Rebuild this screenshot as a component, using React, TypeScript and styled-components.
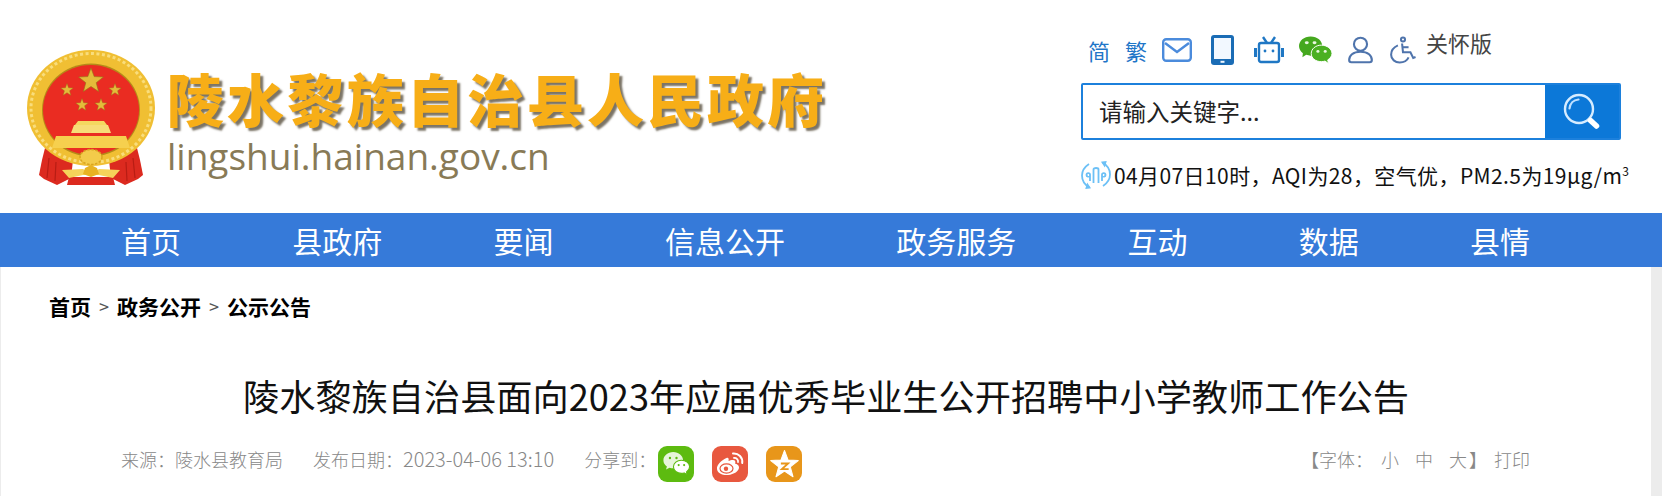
import styled, { createGlobalStyle } from "styled-components";

const CJK = `"Noto Sans CJK SC", "Noto Sans", sans-serif`;

const NAV_ITEMS = ["首页", "县政府", "要闻", "信息公开", "政务服务", "互动", "数据", "县情"];

const GlobalStyle = createGlobalStyle`
    html, body {
        margin: 0;
        padding: 0;
        background: #ececec;
        font-family: ${CJK};
    }
`;

function starPoints(cx: number, cy: number, r: number) {
    const pts: string[] = [];
    for (let i = 0; i < 10; i++) {
        const rad = i % 2 === 0 ? r : r * 0.42;
        const a = -Math.PI / 2 + (i * Math.PI) / 5;
        pts.push(`${(cx + rad * Math.cos(a)).toFixed(1)},${(cy + rad * Math.sin(a)).toFixed(1)}`);
    }
    return pts.join(" ");
}

function Emblem() {
    return (
        <svg width="128" height="135" viewBox="0 0 128 135">
            {/* drapes */}
            <path d="M18 98 L15 110 L12 125 L17 129 L30 135 L44 128 L46 110 Z" fill="#dc2a1f" />
            <path d="M110 98 L113 110 L116 125 L111 129 L98 135 L84 128 L82 110 Z" fill="#dc2a1f" />
            <path d="M22 108 L20 128 M29 112 L28 131 M106 108 L108 128 M99 112 L100 131" stroke="#b81d14" strokeWidth="1.2" fill="none" />
            <path d="M42 127 H86 L88 135 H40 Z" fill="#dc2a1f" />
            {/* ring */}
            <ellipse cx="64" cy="58" rx="64" ry="58" fill="#f0bf33" />
            <ellipse cx="64" cy="58" rx="60" ry="54.5" fill="none" stroke="#f9dd7c" strokeWidth="3" strokeDasharray="3 2.5" />
            <ellipse cx="64" cy="60" rx="49" ry="46.5" fill="#b58a18" />
            {/* disc */}
            <ellipse cx="64" cy="60" rx="48" ry="45" fill="#ea2c22" />
            {/* stars */}
            <polygon points={starPoints(64, 31, 13)} fill="#e4bb3a" stroke="#94721a" strokeWidth="0.6" />
            <polygon points={starPoints(40, 40, 6.5)} fill="#e4bb3a" stroke="#94721a" strokeWidth="0.4" />
            <polygon points={starPoints(88, 40, 6.5)} fill="#e4bb3a" stroke="#94721a" strokeWidth="0.4" />
            <polygon points={starPoints(55, 55, 6.5)} fill="#e4bb3a" stroke="#94721a" strokeWidth="0.4" />
            <polygon points={starPoints(74, 55, 6.5)} fill="#e4bb3a" stroke="#94721a" strokeWidth="0.4" />
            {/* gate */}
            <path d="M48 75 L51 71 H77 L80 75 Z" fill="#f5d860" />
            <path d="M44 83 L47 75 H81 L84 83 Z" fill="#f7dd78" />
            <path d="M29 86 H99 L103 98 H25 Z" fill="#f6d04e" />
            {/* gear and ribbon */}
            <ellipse cx="64" cy="107" rx="11" ry="7.5" fill="#f3cb4a" stroke="#d9a51f" strokeWidth="1.5" strokeDasharray="2.5 1.5" />
            <path d="M35 120 L56 119 L64 124 L72 119 L93 120 L86 128 L72 125 H56 L42 128 Z" fill="#f5d35a" />
            <path d="M56 124 L58 118 L64 115 L70 118 L72 124 L64 127 Z" fill="#e8b322" />
        </svg>
    );
}

function MailIcon() {
    return (
        <svg width="30" height="24" viewBox="0 0 30 24" fill="none" stroke="#4b8bdc" strokeWidth="2.4">
            <rect x="1.2" y="1.2" width="27.6" height="21.6" rx="3" />
            <path d="M3 5 L15 14 L27 5" />
        </svg>
    );
}

function PhoneIcon() {
    return (
        <svg width="23" height="30" viewBox="0 0 23 30">
            <rect width="23" height="30" rx="3" fill="#1a6cb5" />
            <rect x="3" y="3" width="17" height="21" fill="#f2f8ff" />
            <rect x="9.5" y="25.8" width="4" height="2" fill="#f2f8ff" />
        </svg>
    );
}

function TvIcon() {
    return (
        <svg width="30" height="28" viewBox="0 0 30 28" fill="none" stroke="#1f77c4" strokeWidth="2.4">
            <path d="M9 1 L13 7 M21 1 L17 7" />
            <rect x="5" y="7" width="20" height="19" rx="2" />
            <path d="M1.5 12 V21 M28.5 12 V21" strokeWidth="3" />
            <circle cx="11" cy="15" r="1.4" fill="#1f77c4" stroke="none" />
            <circle cx="19" cy="15" r="1.4" fill="#1f77c4" stroke="none" />
        </svg>
    );
}

function WechatIcon() {
    return (
        <svg width="33" height="28" viewBox="0 0 34 28">
            <path d="M12 0 C5 0 0 4.5 0 10 C0 13 1.6 15.6 4 17.4 L3.5 21.5 L7.4 19 C9 19.6 10.5 19.8 12 19.8 C19 19.8 24 15.4 24 10 C24 4.5 19 0 12 0 Z" fill="#45a81e" />
            <path d="M23 9 C17 9 12.6 13 12.6 17.6 C12.6 22.4 17 26 23 26 C24.4 26 25.6 25.8 26.8 25.4 L30.4 28 L29.6 24.2 C32.2 22.6 34 20.2 34 17.6 C34 13 29 9 23 9 Z" fill="#4bb022" stroke="#fff" strokeWidth="1" />
            <ellipse cx="8" cy="6.5" rx="2" ry="1.5" fill="#eaf7e0" />
            <ellipse cx="16" cy="6.5" rx="2" ry="1.5" fill="#eaf7e0" />
            <ellipse cx="19.5" cy="15.5" rx="1.6" ry="1.4" fill="#eaf7e0" />
            <ellipse cx="27" cy="15.5" rx="1.6" ry="1.4" fill="#eaf7e0" />
        </svg>
    );
}

function UserIcon() {
    return (
        <svg width="25" height="28" viewBox="0 0 26 28" fill="none" stroke="#4f74ac" strokeWidth="2.2">
            <circle cx="13" cy="8" r="6.8" />
            <path d="M3.5 26.8 H22.5 C24 26.8 24.8 26 24.8 24.5 C24.8 20 21 15.8 13 15.8 C5 15.8 1.2 20 1.2 24.5 C1.2 26 2 26.8 3.5 26.8 Z" />
        </svg>
    );
}

function AccessIcon() {
    return (
        <svg width="26" height="28" viewBox="0 0 28 29" fill="none" stroke="#4f74ac" strokeWidth="2.2">
            <circle cx="14" cy="3.2" r="2.2" />
            <path d="M13 7.5 L14 17 H22 L25 23 L27.5 22" />
            <path d="M8.5 9.5 C3.8 11.6 1.2 15.4 1.2 19.5 C1.2 24.6 5.6 28 10.4 28 C15 28 18.6 25.6 20 22.5" />
            <path d="M13.5 11.5 H20" />
        </svg>
    );
}

function SearchIcon() {
    return (
        <svg width="38" height="38" viewBox="0 0 38 38" fill="none">
            <circle cx="16" cy="16" r="14" stroke="#d6ecff" strokeWidth="2.4" />
            <path d="M6.5 15.5 C7 10.5 10.5 7 15.5 6.5" stroke="#bfe0ff" strokeWidth="2.2" strokeLinecap="round" />
            <path d="M27.5 27.5 L33.5 33" strokeWidth="5.5" strokeLinecap="round" stroke="#fff" />
        </svg>
    );
}

function AirIcon() {
    return (
        <svg width="30" height="30" viewBox="0 0 30 30" fill="none" stroke="#6cc0f6" strokeWidth="1.8">
            <path d="M8 4 C3.5 7 1 11 1 15.5 C1 20.5 4 25 8.5 27.5" />
            <path d="M22 26 C26.5 23 29 19 29 14.5 C29 9.5 26 5 21.5 2.5" />
            <path d="M8.5 27.5 L5.5 28 L6.5 24.5 Z M21.5 2.5 L24.5 2 L23.5 5.5 Z" fill="#6cc0f6" />
            <path d="M12.5 23 V9.5 C12.5 7.5 17.5 7.5 17.5 9.5 V23" />
            <path d="M9 21 V14.5 C9 12.5 5.5 12.5 5.5 15 C5.5 17 8 17 8 16" />
            <path d="M21 21 V14.5 C21 12.5 24.5 12.5 24.5 15 C24.5 17 22 17 22 16" />
        </svg>
    );
}

function ShareWechat() {
    return (
        <svg width="27" height="24" viewBox="0 0 24 22" fill="#fff">
            <path d="M9 0 C4 0 0 3.4 0 7.6 C0 10 1.2 12 3.2 13.4 L2.4 16 L5.6 14.4 C6.6 14.8 7.8 15 9 15 C14 15 18 11.8 18 7.6 C18 3.4 14 0 9 0 Z" opacity="0.85" />
            <path d="M16.5 7.5 C12.4 7.5 9.2 10.2 9.2 13.6 C9.2 17 12.4 19.6 16.5 19.6 C17.4 19.6 18.3 19.5 19 19.2 L21.8 20.8 L21.2 18.3 C22.9 17.1 24 15.5 24 13.6 C24 10.2 20.6 7.5 16.5 7.5 Z" stroke="#5dbb10" strokeWidth="1" />
            <circle cx="6" cy="5.5" r="1.1" fill="#5dbb10" />
            <circle cx="12" cy="5.5" r="1.1" fill="#5dbb10" />
            <circle cx="14" cy="12" r="1" fill="#5dbb10" />
            <circle cx="19" cy="12" r="1" fill="#5dbb10" />
        </svg>
    );
}

function ShareWeibo() {
    return (
        <svg width="28" height="24" viewBox="0 0 28 24" fill="none">
            <path d="M10.5 6 C5 8.5 0.5 13 1 17 C1.5 21.5 7 23.5 12 23 C18 22.5 23 19 23 15.5 C23 13 20.5 12 19 11.6 C20 9.5 19 8 17 8 C15.5 8 13.5 8.5 12.5 9 C13 7 12.5 5.2 10.5 6 Z" fill="#fff" />
            <ellipse cx="10.5" cy="16.5" rx="6.5" ry="4.6" fill="none" stroke="#e8583f" strokeWidth="1.2" />
            <circle cx="10" cy="16.8" r="2.2" fill="#e8583f" />
            <path d="M17 1.5 C22.5 1 27 5.5 26.2 11" stroke="#fff" strokeWidth="2" strokeLinecap="round" />
            <path d="M18 6 C20.5 5.7 22.5 7.7 22 10" stroke="#fff" strokeWidth="1.8" strokeLinecap="round" />
        </svg>
    );
}

function ShareQzone() {
    return (
        <svg width="29" height="28" viewBox="0 0 28 27">
            <polygon points={starPoints(14, 14.5, 14)} fill="#fff" stroke="#fff" strokeWidth="1" strokeLinejoin="round" />
            <path d="M10.5 13 H17.5 L11.5 18.5 H18" fill="none" stroke="#e8961a" strokeWidth="1.8" />
        </svg>
    );
}

export default function App() {
    return (
        <Page>
            <GlobalStyle />
            <Header>
                <Logo>
                    <Emblem />
                    <LogoText>
                        <SiteName>陵水黎族自治县人民政府</SiteName>
                        <Domain>lingshui.hainan.gov.cn</Domain>
                    </LogoText>
                </Logo>
                <Tools>
                    <ToolRow>
                        <LangLink>简</LangLink>
                        <LangLink>繁</LangLink>
                        <ToolIcon $after={19}>
                            <MailIcon />
                        </ToolIcon>
                        <ToolIcon $after={20}>
                            <PhoneIcon />
                        </ToolIcon>
                        <ToolIcon $after={15}>
                            <TvIcon />
                        </ToolIcon>
                        <ToolIcon $after={16}>
                            <WechatIcon />
                        </ToolIcon>
                        <ToolIcon $after={17}>
                            <UserIcon />
                        </ToolIcon>
                        <ToolIcon $after={10}>
                            <AccessIcon />
                        </ToolIcon>
                        <CareLink>关怀版</CareLink>
                    </ToolRow>
                    <SearchBox>
                        <SearchInput defaultValue="请输入关键字..." />
                        <SearchButton aria-label="搜索">
                            <SearchIcon />
                        </SearchButton>
                    </SearchBox>
                    <Weather>
                        <AirIcon />
                        <WeatherText>
                            04月07日10时，AQI为28，空气优，PM2.5为19μg/m<sup>3</sup>
                        </WeatherText>
                    </Weather>
                </Tools>
            </Header>
            <Nav>
                {NAV_ITEMS.map((item) => (
                    <NavItem key={item}>{item}</NavItem>
                ))}
            </Nav>
            <Article>
                <Breadcrumb>
                    <span>首页</span>
                    <Crumb>&gt;</Crumb>
                    <span>政务公开</span>
                    <Crumb>&gt;</Crumb>
                    <span>公示公告</span>
                </Breadcrumb>
                <Heading>陵水黎族自治县面向2023年应届优秀毕业生公开招聘中小学教师工作公告</Heading>
                <MetaRow>
                    <MetaLeft>
                        <span>来源：陵水县教育局</span>
                        <span>
                            发布日期：<DateValue>2023-04-06 13:10</DateValue>
                        </span>
                        <ShareGroup>
                            <ShareLabel>分享到：</ShareLabel>
                            <ShareButton $bg="#5dbb10">
                                <ShareWechat />
                            </ShareButton>
                            <ShareButton $bg="#e8583f">
                                <ShareWeibo />
                            </ShareButton>
                            <ShareButton $bg="#e8961a">
                                <ShareQzone />
                            </ShareButton>
                        </ShareGroup>
                    </MetaLeft>
                    <FontTools>
                        <span>【字体：</span>
                        <FontSize>小</FontSize>
                        <FontSize>中</FontSize>
                        <FontSize>大</FontSize>
                        <CloseBracket>】</CloseBracket>
                        <PrintLink>打印</PrintLink>
                    </FontTools>
                </MetaRow>
            </Article>
        </Page>
    );
}

const Page = styled.div`
    width: 1662px;
    height: 496px;
    overflow: hidden;
    display: flex;
    flex-direction: column;
`;

const Header = styled.header`
    height: 213px;
    flex-shrink: 0;
    background: #fff;
    display: flex;
    justify-content: space-between;
    padding: 0 30px 0 27px;
    box-sizing: border-box;
`;

const Logo = styled.div`
    display: flex;
    align-items: flex-start;
    gap: 12px;
    padding-top: 50px;
`;

const LogoText = styled.div`
    display: flex;
    flex-direction: column;
    padding-top: 11px;
`;

const SiteName = styled.div`
    font-size: 57px;
    line-height: 72px;
    font-weight: 900;
    letter-spacing: 3px;
    color: #f7ae17;
    text-shadow: 3px 3px 2px #7b7466;
    white-space: nowrap;
`;

const Domain = styled.div`
    font-family: "Open Sans", sans-serif;
    font-size: 37px;
    line-height: 44px;
    color: #887a56;
    margin-top: 1px;
`;

const Tools = styled.div`
    width: 551px;
    padding-top: 33px;
    box-sizing: border-box;
`;

const ToolRow = styled.div`
    display: flex;
    align-items: center;
    height: 33px;
    box-sizing: border-box;
    padding: 1px 0 0 7px;
`;

const LangLink = styled.span`
    font-size: 22px;
    color: #1f76c8;
    line-height: 32px;
    margin-right: 15px;
`;

const ToolIcon = styled.a<{ $after: number }>`
    display: flex;
    margin-right: ${(p) => p.$after}px;
`;

const CareLink = styled.span`
    font-size: 22px;
    color: #444;
    line-height: 30px;
    margin-top: -16px;
    white-space: nowrap;
`;

const SearchBox = styled.div`
    display: flex;
    width: 540px;
    height: 57px;
    margin-top: 17px;
    border: 2px solid #1c80dc;
    border-radius: 2px;
    box-sizing: border-box;
`;

const SearchInput = styled.input`
    flex: 1;
    min-width: 0;
    border: none;
    outline: none;
    padding: 0 0 2px 16px;
    font-family: ${CJK};
    font-size: 23.5px;
    color: #222;
`;

const SearchButton = styled.button`
    width: 74px;
    border: none;
    padding: 0;
    background: #0c78d8;
    display: flex;
    align-items: center;
    justify-content: center;
    cursor: pointer;
`;

const Weather = styled.div`
    display: flex;
    align-items: center;
    gap: 3px;
    margin-top: 20px;
`;

const WeatherText = styled.span`
    font-size: 21px;
    line-height: 30px;
    letter-spacing: 0.4px;
    color: #111;
    white-space: nowrap;

    sup {
        font-size: 12px;
        line-height: 0;
    }
`;

const Nav = styled.nav`
    height: 54px;
    flex-shrink: 0;
    background: #367ad9;
    display: flex;
    align-items: center;
    gap: 111.3px;
    padding-left: 121px;
`;

const NavItem = styled.a`
    font-size: 30px;
    line-height: 54px;
    color: #fff;
    white-space: nowrap;
`;

const Article = styled.main`
    flex: 1;
    margin: 0 11px 0 1px;
    background: #fff;
    padding: 0 0 0 48px;
`;

const Breadcrumb = styled.div`
    display: flex;
    align-items: center;
    gap: 8px;
    height: 30px;
    margin-top: 24px;
    font-size: 21px;
    font-weight: 700;
    color: #000;
`;

const Crumb = styled.span`
    font-weight: 400;
    font-size: 18px;
    color: #555;
`;

const Heading = styled.h1`
    margin: 49px 48px 0 0;
    font-size: 36.2px;
    line-height: 50px;
    font-weight: 400;
    color: #111;
    text-align: center;
    white-space: nowrap;
`;

const MetaRow = styled.div`
    display: flex;
    justify-content: space-between;
    align-items: flex-start;
    margin-top: 26px;
    padding: 0 121px 0 72px;
    font-size: 18px;
    line-height: 26px;
    font-weight: 300;
    color: #888;
`;

const MetaLeft = styled.div`
    display: flex;
    gap: 30px;
`;

const DateValue = styled.span`
    font-size: 20px;
`;

const ShareGroup = styled.div`
    display: flex;
    align-items: flex-start;
    gap: 18px;
`;

const ShareLabel = styled.span`
    margin-right: -16px;
`;

const ShareButton = styled.a<{ $bg: string }>`
    width: 36px;
    height: 36px;
    border-radius: 9px;
    background: ${(p) => p.$bg};
    display: flex;
    align-items: center;
    justify-content: center;
`;

const FontTools = styled.div`
    display: flex;
`;

const FontSize = styled.a`
    padding: 0 8px;
`;

const CloseBracket = styled.span`
    margin-left: -6px;
`;

const PrintLink = styled.a`
    margin-left: 7px;
`;
